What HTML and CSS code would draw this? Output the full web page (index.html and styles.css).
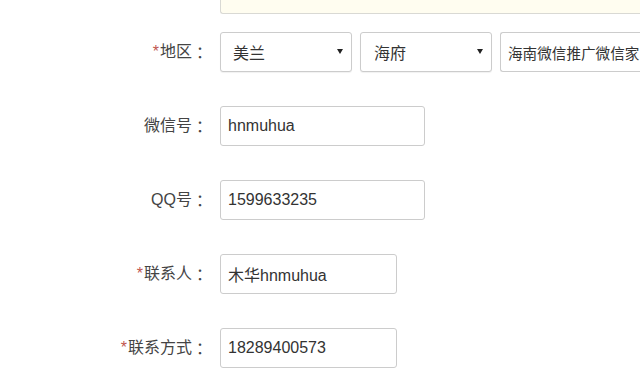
FILE: index.html
```html
<!DOCTYPE html>
<html lang="zh-CN">
<head>
<meta charset="utf-8">
<title>表单</title>
<link rel="stylesheet" href="styles.css">
</head>
<body>
<div class="form">
  <div class="row row-notice">
    <div class="label"></div>
    <div class="notice"></div>
  </div>

  <div class="row row-first">
    <div class="label"><span class="req">*</span>地区<span class="colon">：</span></div>
    <div class="field-group">
      <div class="select sel-a"><span class="sel-text">美兰</span><span class="caret"></span></div>
      <div class="select sel-b"><span class="sel-text">海府</span><span class="caret"></span></div>
      <div class="input input-addr">海南微信推广微信家</div>
    </div>
  </div>

  <div class="row">
    <div class="label">微信号<span class="colon">：</span></div>
    <div class="input input-wide">hnmuhua</div>
  </div>

  <div class="row">
    <div class="label">QQ号<span class="colon">：</span></div>
    <div class="input input-wide">1599633235</div>
  </div>

  <div class="row">
    <div class="label"><span class="req">*</span>联系人<span class="colon">：</span></div>
    <div class="input input-narrow">木华hnmuhua</div>
  </div>

  <div class="row">
    <div class="label"><span class="req">*</span>联系方式<span class="colon">：</span></div>
    <div class="input input-narrow">18289400573</div>
  </div>
</div>
</body>
</html>
```

FILE: styles.css
```css
html, body {
  margin: 0;
  padding: 0;
  background: #ffffff;
  overflow: hidden;
}

body {
  width: 640px;
  height: 388px;
  font-family: "Liberation Sans", "Noto Sans CJK SC", sans-serif;
  font-size: 16px;
  color: #333333;
}

.form {
  display: flex;
  flex-direction: column;
  gap: 34px;
}

.row {
  display: grid;
  grid-template-columns: 208px auto;
  column-gap: 12px;
  align-items: center;
}

.row-notice {
  align-items: start;
}

.row-first {
  margin-top: -16px;
}

.label {
  display: flex;
  justify-content: flex-end;
  align-items: center;
  color: #444444;
  white-space: nowrap;
  line-height: 20px;
}

.req {
  color: #c0574f;
  margin-right: 1px;
}

.colon {
  font-family: "Noto Sans CJK JP", sans-serif;
  display: inline-block;
  width: 16px;
  text-align: center;
}

.notice {
  box-sizing: border-box;
  width: 420px;
  height: 14px;
  background: #fffdf0;
  border: 1px solid #d9d9d4;
  border-top: none;
  border-right: none;
  border-radius: 0 0 0 3px;
}

.field-group {
  display: flex;
  gap: 8px;
  white-space: nowrap;
}

.select,
.input {
  box-sizing: border-box;
  height: 40px;
  border: 1px solid #cccccc;
  border-radius: 3px;
  background: #ffffff;
  display: flex;
  align-items: center;
  white-space: nowrap;
  color: #333333;
}

.select {
  width: 132px;
  padding: 0 8px 0 12px;
  justify-content: space-between;
  box-shadow: 0 1px 1px rgba(0, 0, 0, 0.06);
}

.sel-b {
  padding-left: 13px;
}

.caret {
  width: 0;
  height: 0;
  border-left: 3px solid transparent;
  border-right: 3px solid transparent;
  border-top: 5px solid #222222;
  margin-top: -1px;
}

.input {
  padding: 0 7px;
}

.input-addr {
  width: 140px;
  padding-left: 7px;
  padding-right: 0;
  font-size: 14.6px;
  border-right: none;
  border-radius: 3px 0 0 3px;
  overflow: hidden;
}

.input-wide {
  width: 205px;
}

.input-narrow {
  width: 177px;
}
```
